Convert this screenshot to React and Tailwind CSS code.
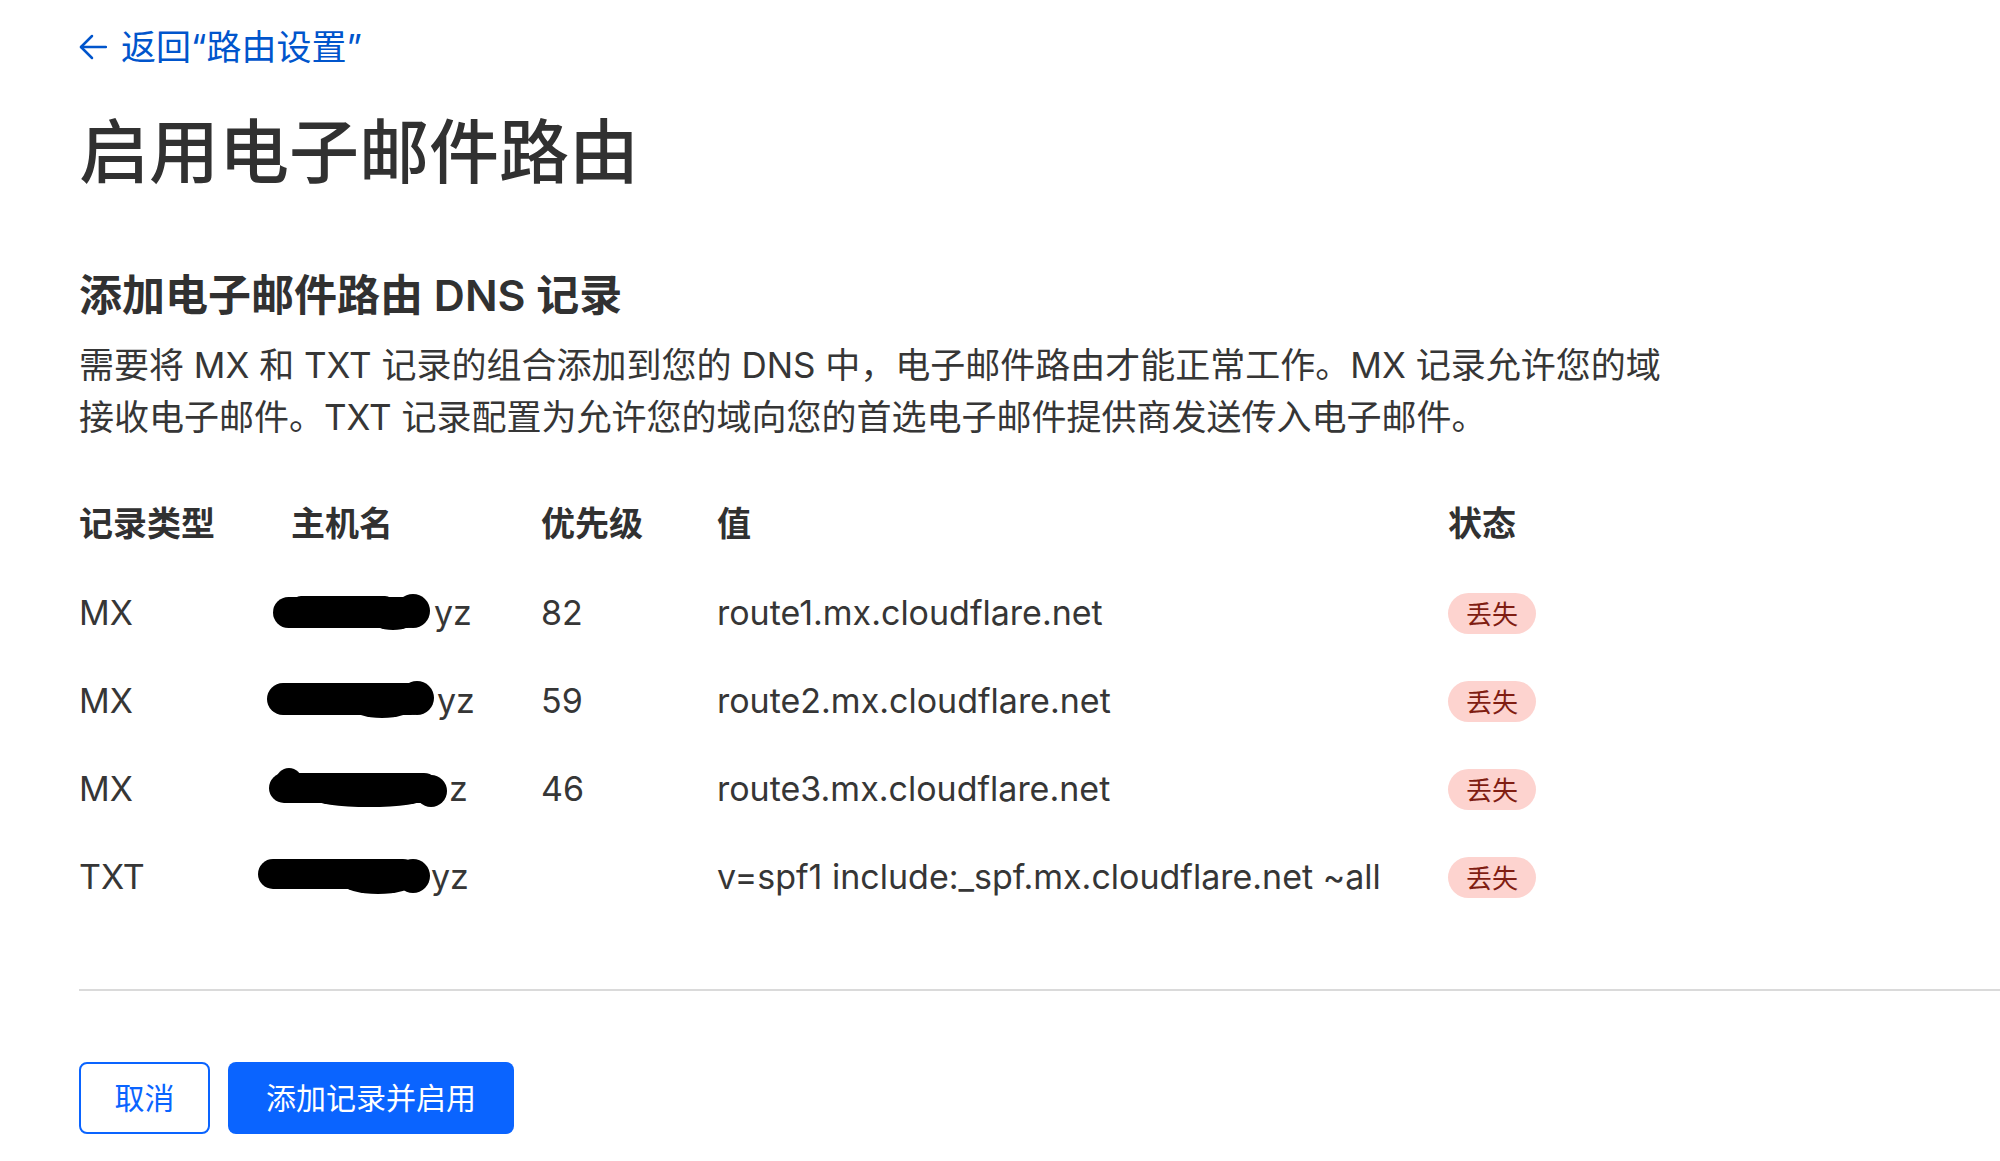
import React from "react";

function Blob({ variant }) {
  if (variant === 1)
    return (
      <svg width="161" height="40" viewBox="0 0 161 40" className="ml-[-18px] shrink-0">
        <rect x="0" y="5" width="150" height="31" rx="15.5" fill="#000" />
        <rect x="20" y="4" width="100" height="20" rx="8" fill="#000" />
        <circle cx="140" cy="19" r="17" fill="#000" />
        <ellipse cx="120" cy="28" rx="22" ry="10" fill="#000" />
      </svg>
    );
  if (variant === 2)
    return (
      <svg width="170" height="40" viewBox="0 0 170 40" className="ml-[-24px] shrink-0">
        <rect x="0" y="3" width="160" height="32" rx="16" fill="#000" />
        <circle cx="150" cy="18" r="17" fill="#000" />
        <ellipse cx="115" cy="28" rx="30" ry="10" fill="#000" />
      </svg>
    );
  if (variant === 3)
    return (
      <svg width="180" height="42" viewBox="0 0 180 42" className="ml-[-22px] shrink-0">
        <rect x="0" y="6" width="170" height="30" rx="15" fill="#000" />
        <circle cx="20" cy="14" r="13" fill="#000" />
        <circle cx="162" cy="24" r="16" fill="#000" />
        <ellipse cx="100" cy="32" rx="55" ry="8" fill="#000" />
      </svg>
    );
  return (
    <svg width="173" height="40" viewBox="0 0 173 40" className="ml-[-33px] shrink-0">
      <rect x="0" y="3" width="160" height="30" rx="15" fill="#000" />
      <circle cx="155" cy="20" r="17" fill="#000" />
      <ellipse cx="120" cy="28" rx="35" ry="10" fill="#000" />
    </svg>
  );
}

function Badge() {
  return (
    <span className="inline-flex h-[41px] items-center rounded-full bg-[#fdd3cf] px-[18px] pt-[4px] text-[26px] leading-none text-[#7f1d12]">
      丢失
    </span>
  );
}

const rows = [
  { type: "MX", blob: 1, tail: "yz", prio: "82", value: "route1.mx.cloudflare.net" },
  { type: "MX", blob: 2, tail: "yz", prio: "59", value: "route2.mx.cloudflare.net" },
  { type: "MX", blob: 3, tail: "z", prio: "46", value: "route3.mx.cloudflare.net" },
  { type: "TXT", blob: 4, tail: "yz", prio: "", value: "v=spf1 include:_spf.mx.cloudflare.net ~all" },
];

export default function App() {
  return (
    <div className="min-h-[1161px] w-full overflow-hidden bg-white pl-[79px] font-['Inter','Noto_Sans_CJK_SC',sans-serif] text-[#333333]">
      {/* back link */}
      <div className="pt-[27px]">
        <a className="inline-flex h-[40px] items-center gap-[14px] text-[35px] leading-[40px] text-[#0055cc]">
          <svg width="28" height="26" viewBox="0 0 28 26" fill="none" stroke="currentColor" strokeWidth="2.5" strokeLinecap="round" strokeLinejoin="round">
            <path d="M27 13H2" />
            <path d="M13 2L2 13L13 24" />
          </svg>
          <span>返回“路由设置”</span>
        </a>
      </div>

      {/* title */}
      <h1 className="mt-[44px] h-[84px] text-[70px] font-medium leading-[84px] text-[#313131]">启用电子邮件路由</h1>

      {/* section heading */}
      <h2 className="mt-[72px] h-[56px] text-[43px] font-semibold leading-[56px] text-[#313131]">添加电子邮件路由 DNS 记录</h2>

      <p className="mt-[16px] w-[1600px] text-[35px] leading-[52px] text-[#363636]">
        需要将 MX 和 TXT 记录的组合添加到您的 DNS 中，电子邮件路由才能正常工作。MX 记录允许您的域接收电子邮件。TXT 记录配置为允许您的域向您的首选电子邮件提供商发送传入电子邮件。
      </p>

      {/* table */}
      <div className="mt-[35px] grid grid-cols-[212px_250px_176px_731px_200px] text-[34px]">
        <div className="flex h-[90px] items-center font-semibold text-[#313131]">记录类型</div>
        <div className="flex h-[90px] items-center font-semibold text-[#313131]">主机名</div>
        <div className="flex h-[90px] items-center font-semibold text-[#313131]">优先级</div>
        <div className="flex h-[90px] items-center font-semibold text-[#313131]">值</div>
        <div className="flex h-[90px] items-center font-semibold text-[#313131]">状态</div>
        {rows.map((r, i) => (
          <React.Fragment key={i}>
            <div className="flex h-[88px] items-center text-[#363636]">{r.type}</div>
            <div className="flex h-[88px] items-center text-[#363636]">
              <Blob variant={r.blob} />
              <span>{r.tail}</span>
            </div>
            <div className="flex h-[88px] items-center text-[#363636]">{r.prio}</div>
            <div className="flex h-[88px] items-center whitespace-nowrap text-[#363636]">{r.value}</div>
            <div className="flex h-[88px] items-center pt-[2px]">
              <Badge />
            </div>
          </React.Fragment>
        ))}
      </div>

      <div className="mt-[69px] h-[2px] w-full bg-[#dadada]" />

      <div className="mt-[71px] flex gap-[18px]">
        <button className="h-[72px] w-[131px] rounded-[8px] border-2 border-[#0a64ff] bg-white text-[30px] text-[#0a64ff]">取消</button>
        <button className="h-[72px] w-[286px] rounded-[8px] bg-[#0a64ff] text-[30px] text-white">添加记录并启用</button>
      </div>
    </div>
  );
}
